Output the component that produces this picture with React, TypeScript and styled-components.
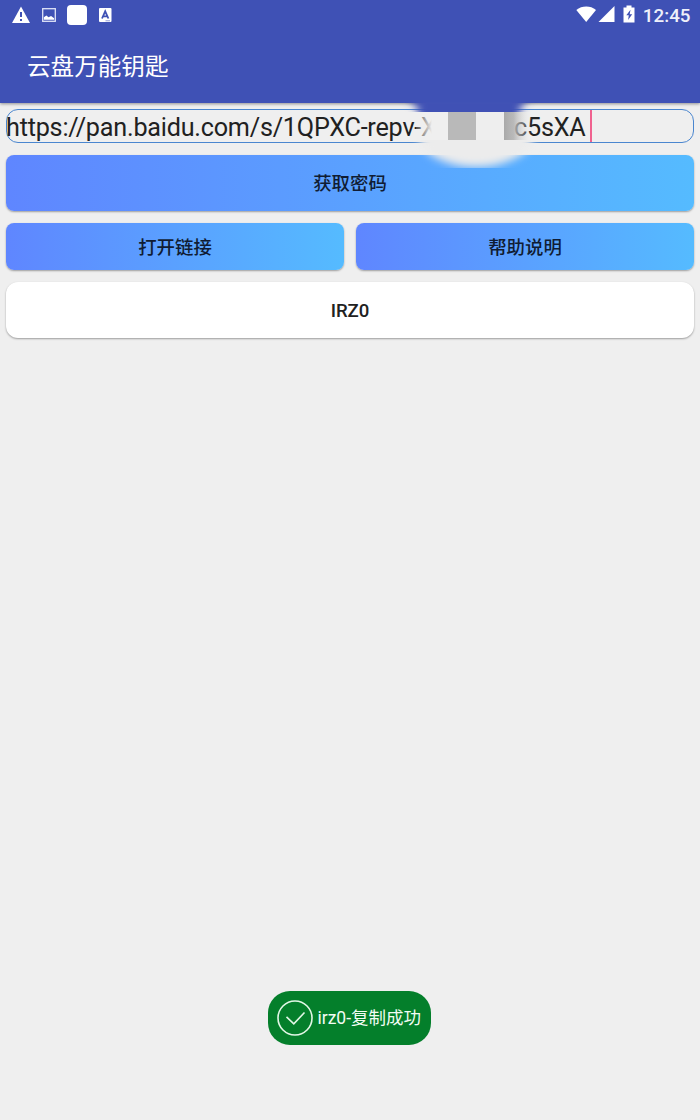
import React from "react";
import styled, { createGlobalStyle } from "styled-components";

const GlobalStyle = createGlobalStyle`
  * { box-sizing: border-box; }
  body {
    margin: 0;
    background: #efefef;
    font-family: Roboto, "Noto Sans CJK SC", sans-serif;
  }
`;

const Screen = styled.div`
  position: relative;
  display: flex;
  flex-direction: column;
  width: 700px;
  height: 1120px;
  overflow: hidden;
  background: #efefef;
`;

const Header = styled.header`
  height: 103px;
  flex: none;
  background: #3f51b5;
  color: #fff;
  box-shadow: 0 1px 3px rgba(0, 0, 0, 0.4);
`;

const StatusBar = styled.div`
  display: flex;
  justify-content: space-between;
  height: 30px;
  padding: 0 9.500px 0 11px;
`;

const StatusGroup = styled.div`
  display: flex;
  align-items: center;
`;

const NoticeGroup = styled(StatusGroup)`
  gap: 11px;
`;

const Notice = styled.span`
  width: 20px;
  height: 20px;
  border-radius: 4px;
  background: #fff;
`;

const Clock = styled.span`
  margin-left: 7px;
  padding-top: 2px;
  font-size: 18.8px;
  line-height: 22px;
  font-weight: 500;
  color: #eef0fa;
`;

const Title = styled.h1`
  margin: 20px 0 0 27px;
  font-size: 23.6px;
  line-height: 34px;
  font-weight: 400;
`;

const Content = styled.main`
  display: flex;
  flex-direction: column;
  gap: 12px;
  padding: 6px 6px 0;
`;

const LinkField = styled.div`
  display: flex;
  align-items: center;
  height: 34px;
  border: 1px solid #4a86cf;
  border-radius: 12px;
  font-size: 25.2px;
  letter-spacing: -0.22px;
  line-height: 32px;
  white-space: pre;
  color: #212121;
`;

const LinkPart = styled.span`
  padding-top: 3px;
`;

const LinkStart = styled(LinkPart)`
  width: 508px;
  margin-left: -1px;
  flex: none;
`;

const Caret = styled.span`
  width: 2px;
  height: 32px;
  margin-left: 5px;
  background: #f0628f;
`;

const GradientButton = styled.button<{ $height: number }>`
  flex: 1 0 auto;
  height: ${(p) => p.$height}px;
  padding: 2px 0 0;
  border: 0;
  border-radius: 8px;
  background: linear-gradient(90deg, #5f86ff, #55bbff);
  box-shadow: 0 1px 2px rgba(0, 0, 0, 0.35);
  color: #101c33;
  font: 500 18.4px/28px Roboto, "Noto Sans CJK SC", sans-serif;
`;

const ButtonRow = styled.div`
  display: grid;
  grid-template-columns: 1fr 1fr;
  gap: 12px;
`;

const Result = styled.div`
  display: flex;
  align-items: center;
  justify-content: center;
  height: 56px;
  padding-top: 1px;
  border-radius: 12px;
  background: #fff;
  box-shadow: 0 1px 2px rgba(0, 0, 0, 0.35);
  color: #212121;
  font-size: 18.6px;
  font-weight: 500;
`;

const Smudge = styled.svg`
  position: absolute;
  left: 390px;
  top: 90px;
`;

const Toast = styled.div`
  position: absolute;
  left: 268px;
  top: 991px;
  display: flex;
  align-items: center;
  gap: 4.500px;
  width: 163px;
  height: 54px;
  padding: 0 0 1px 9px;
  border-radius: 22px;
  background: #047f2b;
  color: #f2fcf4;
  font-size: 17.5px;
  line-height: 24px;
  white-space: nowrap;
`;

const ToastText = styled.span`
  padding-top: 1px;
`;

const WarningIcon = () => (
  <svg width="20" height="18" viewBox="0 0 20 18">
    <path d="M10 0.5 19 17H1Z" fill="#fff" />
    <path d="M10 6v5M10 13v2" stroke="#3f51b5" strokeWidth="2" />
  </svg>
);

const PictureIcon = () => (
  <svg width="14" height="14" viewBox="0 0 15 15">
    <rect x="0.75" y="0.75" width="13.5" height="13.5" fill="none" stroke="#dfe3f7" strokeWidth="1.4" />
    <path d="M2 12.500V10L4.700 8 7 10 9.700 8.500 13 11V12.500Z" fill="#fff" />
  </svg>
);

const LetterIcon = () => (
  <svg width="14" height="14" viewBox="0 0 14 14">
    <rect x="1" width="12.500" height="14" rx="1" fill="#fff" />
    <path d="M4 10.500 7.200 3.300l3.200 7.200M5.400 8.300H9" fill="none" stroke="#3f51b5" strokeWidth="1.800" />
    <path d="M7.500 12.800H12" stroke="#8f9ad6" />
  </svg>
);

const SignalIcons = () => (
  <svg width="60" height="20" viewBox="0 0 60 20">
    <path d="M0.3 5C6 0.4 14.500 0.400 20 5L10.200 17Z" fill="#fff" />
    <path d="M38.500 1v16H22.500Z" fill="#fff" />
    <path d="M50.500 0.500h5v2h3v15h-11V2.500h3Z" fill="#fff" />
    <path d="M54.500 4.800 50.300 10.300h2.500l-.7 4.700 4.100-5.800h-2.500Z" fill="#3f51b5" />
  </svg>
);

const CheckIcon = () => (
  <svg width="36" height="36" viewBox="0 0 36 36" fill="none" stroke="#e2f7e6" strokeWidth="1.6">
    <circle cx="18" cy="18" r="17" />
    <path d="m9.500 16.800 7.300 7L27.500 12.500" />
  </svg>
);

export default function App() {
  return (
    <Screen>
      <GlobalStyle />
      <Header>
        <StatusBar>
          <NoticeGroup>
            <WarningIcon />
            <PictureIcon />
            <Notice />
            <LetterIcon />
          </NoticeGroup>
          <StatusGroup>
            <SignalIcons />
            <Clock>12:45</Clock>
          </StatusGroup>
        </StatusBar>
        <Title>云盘万能钥匙</Title>
      </Header>
      <Content>
        <LinkField>
          <LinkStart>https://pan.baidu.com/s/1QPXC-repv-X</LinkStart>
          <LinkPart>c5sXA</LinkPart>
          <Caret />
        </LinkField>
        <GradientButton $height={56}>获取密码</GradientButton>
        <ButtonRow>
          <GradientButton $height={47}>打开链接</GradientButton>
          <GradientButton $height={47}>帮助说明</GradientButton>
        </ButtonRow>
        <Result>IRZ0</Result>
      </Content>
      <Smudge width="160" height="90" viewBox="0 0 160 90">
        <defs>
          <filter id="soft" x="-30%" y="-50%" width="160%" height="200%">
            <feGaussianBlur stdDeviation="4" />
          </filter>
          <linearGradient id="left">
            <stop offset="0" stopColor="#efefef" stopOpacity="0.200" />
            <stop offset="0.500" stopColor="#efefef" />
          </linearGradient>
          <linearGradient id="right">
            <stop offset="0" stopColor="#a9a9a9" />
            <stop offset="0.350" stopColor="#b4b4b4" stopOpacity="0.900" />
            <stop offset="1" stopColor="#efefef" stopOpacity="0" />
          </linearGradient>
          <clipPath id="top"><rect y="12" width="160" height="10" /></clipPath>
          <clipPath id="bottom"><rect y="50" width="160" height="28" /></clipPath>
        </defs>
        <g clipPath="url(#top)">
          <path d="M14 4H142L130 18V34H28V18Z" fill="#3f51b5" filter="url(#soft)" />
        </g>
        <rect x="26" y="22" width="32" height="28" fill="url(#left)" />
        <rect x="58" y="22" width="28" height="28" fill="#b9b9b9" />
        <rect x="86" y="22" width="28" height="28" fill="#eeeeee" />
        <rect x="114" y="22" width="28" height="28" fill="url(#right)" />
        <g clipPath="url(#bottom)">
          <ellipse cx="86" cy="44" rx="58" ry="33" fill="#ececec" filter="url(#soft)" />
        </g>
      </Smudge>
      <Toast>
        <CheckIcon />
        <ToastText>irz0-复制成功</ToastText>
      </Toast>
    </Screen>
  );
}
